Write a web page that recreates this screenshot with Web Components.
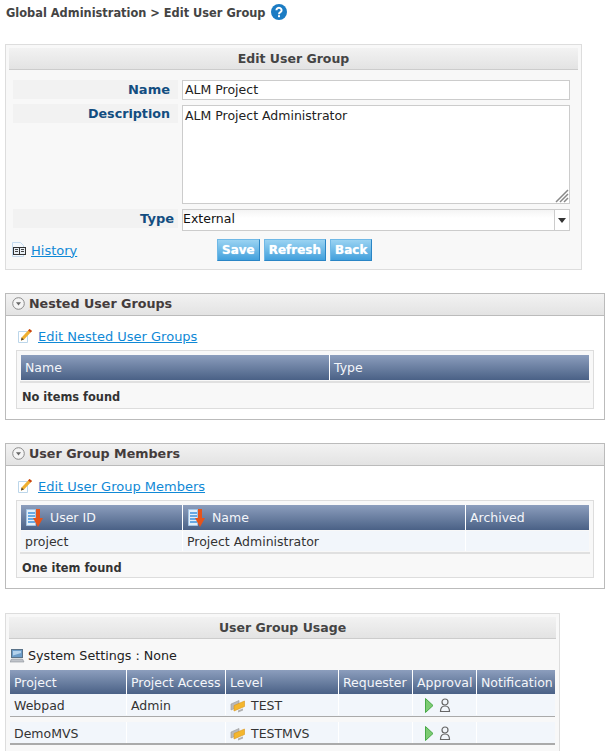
<!DOCTYPE html>
<html>
<head>
<meta charset="utf-8">
<title>Edit User Group</title>
<style>
    html, body { margin: 0; height: 751px; overflow: hidden; background: #fff; }
    body { font: 12px "DejaVu Sans", Verdana, sans-serif; color: #222; }
</style>
</head>
<body>
<template id="icons">
    <svg data-name="help" width="16" height="16" viewBox="0 0 16 16"><circle cx="8" cy="8" r="8" fill="#1b7cc4"/><path d="M5.400 6.200a2.600 2.400 0 1 1 4 2c-1 .6-1.400 1-1.400 2" fill="none" stroke="#fff" stroke-width="2"/><rect x="7" y="11.200" width="2" height="2" fill="#fff"/></svg>
    <svg data-name="collapse" width="13" height="13" viewBox="0 0 13 13"><circle cx="6.500" cy="6.500" r="5.800" fill="#f4f4f4" stroke="#8a8a8a"/><path d="M4 5.300h5L6.500 8.400z" fill="#666"/></svg>
    <svg data-name="edit" width="15" height="16" viewBox="0 0 15 16"><path d="M.5 3.500h9v11h-9z" fill="#fff" stroke="#bcd6ea"/><path d="M3 12.500l.6-3L11.500 1l2.500 2L6 11.500z" fill="#f0b030"/><path d="M11.500 1l2.500 2-1.400 1.500-2.500-2z" fill="#c8401c"/><path d="M3 12.500l.6-3 2.400 2z" fill="#5a4a30"/></svg>
    <svg data-name="history" width="16" height="16" viewBox="0 0 16 16"><path d="M1.500.5h8l3 3v11h-11z" fill="#f4f8fc" stroke="#c4daee"/><rect x="2.500" y="5.500" width="12" height="7" fill="#e8eef4" stroke="#333"/><path d="M8.500 5v8" stroke="#333"/><path d="M4 7.500h3M4 9.500h3M10 7.500h3M10 9.500h3" stroke="#444"/></svg>
    <svg data-name="sort" width="18" height="20" viewBox="0 0 18 20"><path d="M1.500 1.500h9v16h-9z" fill="#e4eff9" stroke="#a4c4e4"/><path d="M3 5h7M3 8h7M3 11h7M3 14h7" stroke="#3f92dc" stroke-width="1.500"/><path d="M11 1h4v9h3l-5 9-5-9h3z" fill="#e4541c"/></svg>
    <svg data-name="computer" width="15" height="16" viewBox="0 0 15 16"><rect x="1.500" y="1.500" width="11" height="8" fill="#6c9cc8" stroke="#5a7288"/><path d="M3 3h8v2L3 7.500z" fill="#b4d2ec"/><path d="M1.500 11h11l1.500 3H0z" fill="#c0c4ca" stroke="#8a9098" stroke-width=".6"/></svg>
    <svg data-name="level" width="16" height="14" viewBox="0 0 16 14"><path d="M1 5l8-3.500v6L1 11z" fill="#b9b9b9" stroke="#999" stroke-width=".6"/><path d="M4 6.500l10.500-4.500v5.500L4 12z" fill="#f4b62c" stroke="#d8961c" stroke-width=".6"/><path d="M8 11.500l5-2v2l-5 2z" fill="#b0b0b0"/></svg>
    <svg data-name="approval" width="28" height="15" viewBox="0 0 28 15"><path d="M1.500 .5l7.500 7-7.500 7z" fill="#7ccb72" stroke="#46a846"/><circle cx="21" cy="4" r="3" fill="none" stroke="#666" stroke-width="1.200"/><path d="M16.500 13.500c0-3.500 2-5.500 4.500-5.500s4.500 2 4.500 5.500z" fill="none" stroke="#666" stroke-width="1.200"/></svg>
</template>

<page-title>Global Administration &gt; Edit User Group</page-title>

<form-card heading="Edit User Group">
    <form-row label="Name" height="19"><text-box>ALM Project</text-box></form-row>
    <form-row label="Description" height="100" size="12.700"><text-box multiline>ALM Project Administrator</text-box></form-row>
    <form-row label="Type" height="22" pad="4"><select-box>External</select-box></form-row>
    <form-actions>
        <icon-link slot="left" icon="history" href="#history">History</icon-link>
        <ui-button>Save</ui-button>
        <ui-button>Refresh</ui-button>
        <ui-button>Back</ui-button>
    </form-actions>
</form-card>

<collapse-panel heading="Nested User Groups" style="margin-top:23px">
    <icon-link icon="edit" href="#nested">Edit Nested User Groups</icon-link>
    <table-box>
        <data-grid cols="309px 1fr">
            <grid-cell head>Name</grid-cell><grid-cell head>Type</grid-cell>
        </data-grid>
        <span slot="summary">No items found</span>
    </table-box>
</collapse-panel>

<collapse-panel heading="User Group Members" style="margin-top:23px">
    <icon-link icon="edit" href="#members">Edit User Group Members</icon-link>
    <table-box compact>
        <data-grid cols="162px 283px 1fr">
            <grid-cell head sort>User ID</grid-cell><grid-cell head sort>Name</grid-cell><grid-cell head>Archived</grid-cell>
            <grid-cell>project</grid-cell><grid-cell>Project Administrator</grid-cell><grid-cell></grid-cell>
        </data-grid>
        <span slot="summary">One item found</span>
    </table-box>
</collapse-panel>

<usage-card heading="User Group Usage">
    <system-line>System Settings : None</system-line>
    <data-grid cols="117px 99px 113px 74px 64px 1fr" head-height="24" row-height="21" ruled>
        <grid-cell head>Project</grid-cell><grid-cell head>Project Access</grid-cell><grid-cell head>Level</grid-cell><grid-cell head>Requester</grid-cell><grid-cell head>Approval</grid-cell><grid-cell head>Notification</grid-cell>
        <grid-cell>Webpad</grid-cell><grid-cell>Admin</grid-cell><grid-cell icon="level">TEST</grid-cell><grid-cell></grid-cell><grid-cell icon="approval" inset></grid-cell><grid-cell></grid-cell>
        <grid-cell>DemoMVS</grid-cell><grid-cell></grid-cell><grid-cell icon="level">TESTMVS</grid-cell><grid-cell></grid-cell><grid-cell icon="approval" inset></grid-cell><grid-cell></grid-cell>
    </data-grid>
</usage-card>

<script>
    function icon(name) {
        const svg = document.getElementById('icons').content.querySelector(`[data-name="${name}"]`);
        return svg ? svg.outerHTML : '';
    }

    const BAR = 'background:linear-gradient(#f2f2f2,#e3e3e3);';

    class Base extends HTMLElement {
        constructor() {
            super();
            this.attachShadow({ mode: 'open' });
        }
        connectedCallback() {
            this.shadowRoot.innerHTML = this.markup();
        }
    }

    class PageTitle extends Base {
        markup() {
            return `<style>
                :host { display: flex; align-items: center; gap: 6px; height: 24px; padding-left: 6px; font-weight: bold; font-size: 11.400px; color: #444; }
                span { padding-top: 1px; }
                svg { display: block; }
            </style><span><slot></slot></span>${icon('help')}`;
        }
    }

    class FormCard extends Base {
        markup() {
            return `<style>
                :host { display: block; width: 569px; height: 218px; margin: 20px 0 0 5px; border: 1px solid #ddd; background: #f8f8f8; padding: 3px; }
                h2 { margin: 0 0 10px; height: 21px; line-height: 21px; ${BAR} border-bottom: 1px solid #ccc; font-size: 12.500px; text-align: center; color: #444; }
                .body { display: flex; flex-direction: column; gap: 5px; padding: 0 8px 0 4px; }
            </style><h2>${this.getAttribute('heading')}</h2><div class="body"><slot></slot></div>`;
        }
    }

    class FormRow extends Base {
        markup() {
            const h = this.getAttribute('height');
            const size = this.getAttribute('size') || '13';
            const pad = this.getAttribute('pad') || '8';
            return `<style>
                :host { display: grid; grid-template-columns: 165px 1fr; gap: 4px; height: ${h}px; }
                label { height: 19px; line-height: 19px; background: #f2f2f2; text-align: right; padding-right: ${pad}px; box-sizing: border-box; font-weight: bold; font-size: ${size}px; color: #124d80; }
            </style><label>${this.getAttribute('label')}</label><slot></slot>`;
        }
    }

    class TextBox extends Base {
        markup() {
            const multi = this.hasAttribute('multiline');
            const resize = multi ? `<svg class="grip" width="14" height="14" viewBox="0 0 14 14"><path d="M1 13L13 1M5 13l8-8M9 13l4-4" stroke="#888" stroke-width="1.500"/></svg>` : '';
            return `<style>
                :host { display: block; position: relative; background: #fff; border: 1px solid #ccc; box-sizing: border-box; padding: 0 2px; font-size: 12.500px; line-height: ${multi ? '20px' : '18px'}; color: #222; ${multi ? 'margin-top: 1px;' : ''} }
                .grip { position: absolute; right: 0; bottom: 0; }
            </style><slot></slot>${resize}`;
        }
    }

    class SelectBox extends Base {
        markup() {
            return `<style>
                :host { display: flex; background: linear-gradient(#f4f4f4,#fff 40%); border: 1px solid #ccc; box-sizing: border-box; font-size: 12.500px; line-height: 17px; color: #111; }
                .val { flex: 1; }
                .arrow { width: 14px; border-left: 1px solid #ccc; background: #fff; display: flex; align-items: center; justify-content: center; }
                .arrow i { width: 0; height: 0; border: 4px solid transparent; border-top: 5px solid #333; border-bottom: 0; }
            </style><div class="val"><slot></slot></div><div class="arrow"><i></i></div>`;
        }
    }

    class FormActions extends Base {
        markup() {
            return `<style>
                :host { display: flex; align-items: center; margin-top: 3px; height: 22px; }
                .left { width: 206px; margin-left: -2px; padding-top: 3px; }
                .btns { display: flex; gap: 4px; }
            </style><div class="left"><slot name="left"></slot></div><div class="btns"><slot></slot></div>`;
        }
    }

    class UiButton extends Base {
        markup() {
            return `<style>
                :host { display: block; height: 22px; box-sizing: border-box; padding: 0 4px; line-height: 21px; background: linear-gradient(#9ad3f2,#42a0dc); border: 1px solid #6fb8e6; border-bottom-color: #2a85c5; border-right-color: #2a85c5; color: #fff; font-weight: bold; font-size: 12px; text-shadow: 0 0 1px #d8f0ff; cursor: pointer; }
            </style><slot></slot>`;
        }
    }

    class IconLink extends Base {
        markup() {
            return `<style>
                :host { display: inline-flex; align-items: center; gap: 4px; height: 16px; font-size: 13px; }
                a { color: #1089d6; text-decoration: underline; }
                svg { display: block; }
            </style>${icon(this.getAttribute('icon'))}<a href="${this.getAttribute('href')}"><slot></slot></a>`;
        }
    }

    class CollapsePanel extends Base {
        markup() {
            return `<style>
                :host { display: block; width: 598px; margin-left: 5px; border: 1px solid #bbb; background: #fff; }
                header { display: flex; align-items: center; gap: 4px; height: 22px; box-sizing: border-box; padding: 0 0 2px 6px; ${BAR} border-bottom: 1px solid #bbb; font-weight: bold; font-size: 12.700px; color: #443c3c; }
                svg { display: block; }
                .body { display: flex; flex-direction: column; gap: 6px; padding: 12px 10px 10px; }
                ::slotted(icon-link) { align-self: flex-start; margin-left: 2px; gap: 5px; }
            </style><header>${icon('collapse')}${this.getAttribute('heading')}</header><div class="body"><slot></slot></div>`;
        }
    }

    class TableBox extends Base {
        markup() {
            const h = this.hasAttribute('compact') ? 23 : 25;
            return `<style>
                :host { display: block; background: #f8f8f8; border: 1px solid #ddd; padding: 4px 4px 0; }
                .summary { border-top: 2px solid #e0e0e0; margin: 1px -1px 0; padding: 0 1px 0 2px; height: ${h}px; line-height: 28px; font-weight: bold; font-size: 11.400px; color: #333; }
            </style><slot></slot><div class="summary"><slot name="summary"></slot></div>`;
        }
    }

    class DataGrid extends Base {
        markup() {
            this.style.setProperty('--head-h', (this.getAttribute('head-height') || '25') + 'px');
            this.style.setProperty('--row-h', (this.getAttribute('row-height') || '20') + 'px');
            return `<style>
                :host { display: block; }
                .grid { display: grid; grid-template-columns: ${this.getAttribute('cols')}; }
            </style><div class="grid"><slot></slot></div>`;
        }
    }

    class GridCell extends Base {
        markup() {
            const grid = this.closest('data-grid');
            const ruled = grid.hasAttribute('ruled');
            const n = grid.getAttribute('cols').split(' ').length;
            const last = [...this.parentNode.children].indexOf(this) % n === n - 1;
            const edge = last ? '0' : '1px solid #fff';
            const lead = this.hasAttribute('sort') ? icon('sort') : icon(this.getAttribute('icon'));
            const headCss = `height: var(--head-h); background: linear-gradient(#8c9ebd,#4a6186); color: #f4f6fa; border-right: ${edge};`;
            const sep = last ? '' : 'linear-gradient(#fff,#fff) right top/1px 21px no-repeat,';
            const rowCss = ruled
                ? `height: calc(var(--row-h) + 7px); padding-bottom: 6px; padding-top: 1px; background: ${sep} linear-gradient(#f2f6fb 0, #f2f6fb 21.500px, #aaa 21.500px, #aaa 23px, transparent 23px); color: #333;`
                : `height: var(--row-h); background: #f2f6fb; margin-top: 1px; border-right: ${edge}; color: #333;`;
            return `<style>
                :host { display: flex; align-items: center; gap: ${this.hasAttribute('sort') ? '7px' : '5px'}; padding-left: ${this.hasAttribute('inset') ? '11px' : '4px'}; box-sizing: border-box; white-space: nowrap; font-size: 12.500px; ${this.hasAttribute('head') ? headCss : rowCss} }
                svg { display: block; flex: none; }
            </style>${lead}<slot></slot>`;
        }
    }

    class UsageCard extends Base {
        markup() {
            return `<style>
                :host { display: block; width: 547px; margin: 24px 0 0 5px; border: 1px solid #ddd; background: #f8f8f8; padding: 3px; }
                h2 { margin: 0; height: 21px; line-height: 21px; ${BAR} border-bottom: 1px solid #ccc; font-size: 12.500px; text-align: center; color: #444; }
                .body { margin: 0 1px; }
            </style><h2>${this.getAttribute('heading')}</h2><div class="body"><slot></slot></div>`;
        }
    }

    class SystemLine extends Base {
        markup() {
            return `<style>
                :host { display: flex; align-items: center; gap: 3px; height: 29px; padding-top: 2px; font-size: 12.700px; color: #222; }
                svg { display: block; }
            </style>${icon('computer')}<slot></slot>`;
        }
    }

    customElements.define('page-title', PageTitle);
    customElements.define('form-card', FormCard);
    customElements.define('form-row', FormRow);
    customElements.define('text-box', TextBox);
    customElements.define('select-box', SelectBox);
    customElements.define('form-actions', FormActions);
    customElements.define('ui-button', UiButton);
    customElements.define('icon-link', IconLink);
    customElements.define('collapse-panel', CollapsePanel);
    customElements.define('table-box', TableBox);
    customElements.define('data-grid', DataGrid);
    customElements.define('grid-cell', GridCell);
    customElements.define('usage-card', UsageCard);
    customElements.define('system-line', SystemLine);
</script>
</body>
</html>
